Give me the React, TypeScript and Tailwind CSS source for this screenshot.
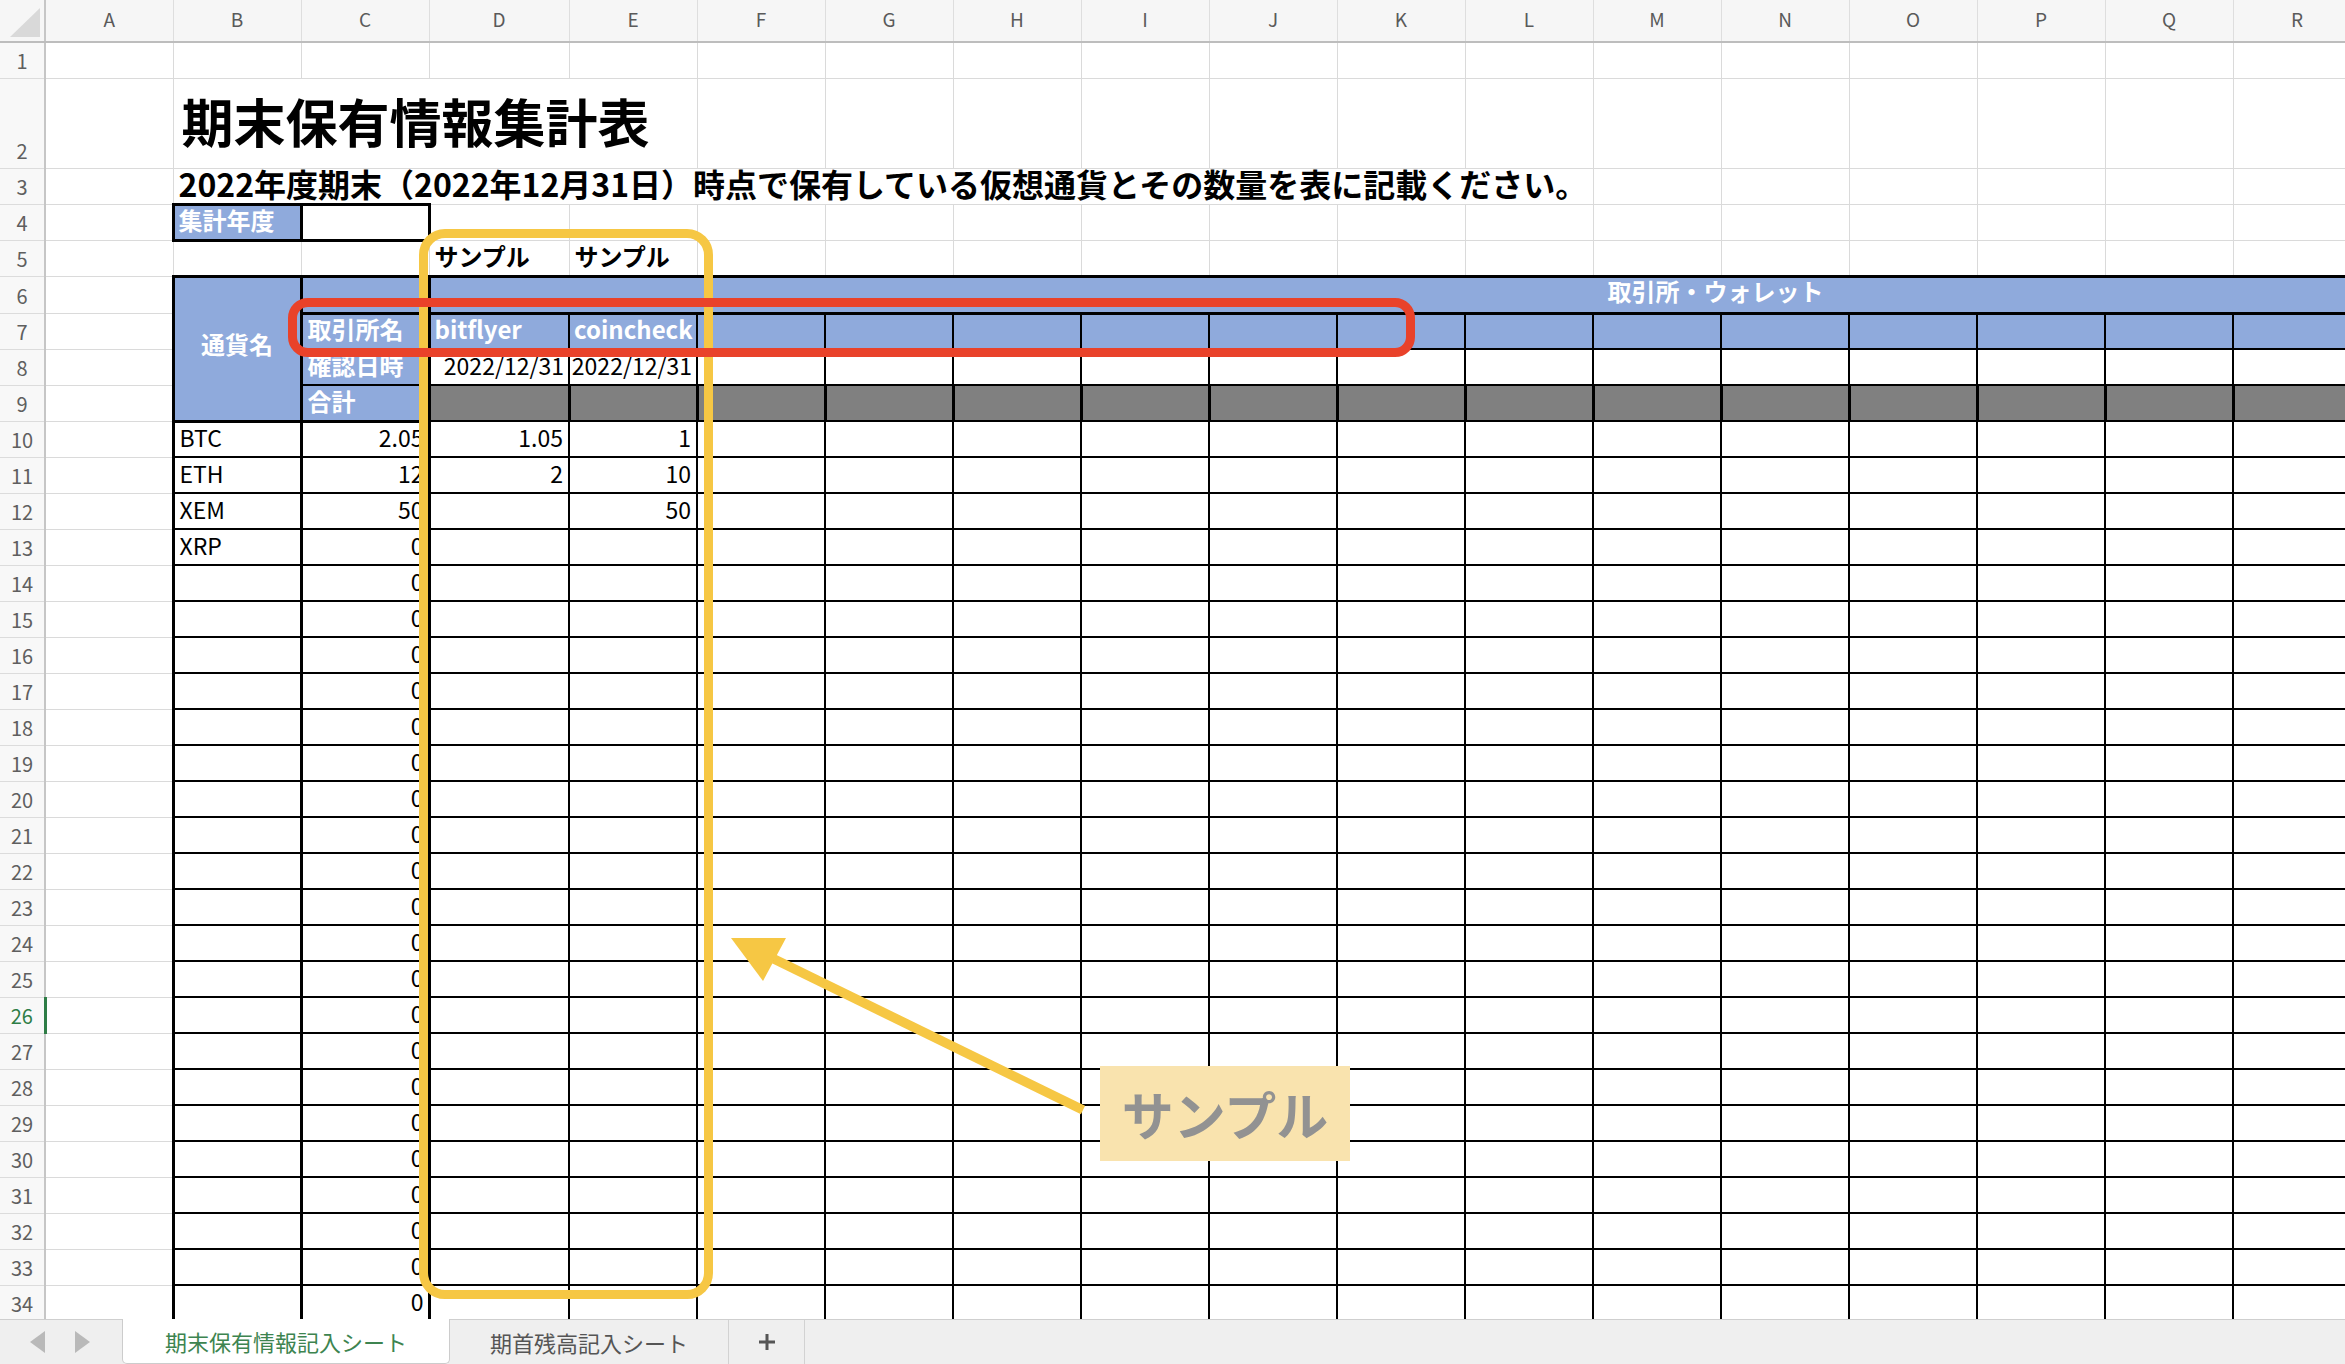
import React from 'react';

type Side = 'g' | 't' | 'T' | 'n';

// collapsed borders: the wider one wins, so black lines override the grey grid
const TOP: Record<Side, string> = {
  g: 'border-t border-t-[#dadada]',
  t: 'border-t-2 border-t-black',
  T: 'border-t-[3px] border-t-black',
  n: 'border-t-0',
};
const RIGHT: Record<Side, string> = {
  g: 'border-r border-r-[#dadada]',
  t: 'border-r-2 border-r-black',
  T: 'border-r-[3px] border-r-black',
  n: 'border-r-0',
};
const BOTTOM: Record<Side, string> = {
  g: 'border-b border-b-[#dadada]',
  t: 'border-b-2 border-b-black',
  T: 'border-b-[3px] border-b-black',
  n: 'border-b-0',
};
const LEFT: Record<Side, string> = {
  g: 'border-l border-l-[#dadada]',
  t: 'border-l-2 border-l-black',
  T: 'border-l-[3px] border-l-black',
  n: 'border-l-0',
};

const edges = (s: string) => {
  const [t, r, b, l] = s.split('') as Side[];
  return `${TOP[t]} ${RIGHT[r]} ${BOTTOM[b]} ${LEFT[l]}`;
};

const LETTERS = ['A', 'B', 'C', 'D', 'E', 'F', 'G', 'H', 'I', 'J', 'K', 'L', 'M', 'N', 'O', 'P', 'Q', 'R'];
const REST = ['F', 'G', 'H', 'I', 'J', 'K', 'L', 'M', 'N', 'O', 'P', 'Q', 'R'];

const coins = ['BTC', 'ETH', 'XEM', 'XRP'];
const totals = ['2.05', '12', '50'];
const bitflyer: Record<number, string> = { 10: '1.05', 11: '2' };
const coincheck: Record<number, string> = { 10: '1', 11: '10', 12: '50' };

const BLUE = 'bg-[#8faadc] text-white font-bold text-[24px]';
const DATA = 'text-[23px] text-black';

interface CellProps {
  b?: string;
  className?: string;
  colSpan?: number;
  rowSpan?: number;
  children?: React.ReactNode;
}

function Cell({ b = 'gggg', className = '', colSpan, rowSpan, children }: CellProps) {
  return (
    <td
      colSpan={colSpan}
      rowSpan={rowSpan}
      className={`whitespace-nowrap p-0 pb-[6px] align-bottom leading-[26px] ${edges(b)} ${className}`}
    >
      {children}
    </td>
  );
}

function RowHead({ n }: { n: number }) {
  const active = n === 26;
  return (
    <th
      className={`border-b border-b-[#dcdcdc] bg-[#f8f8f8] p-0 pb-[5px] text-center align-bottom text-[20px] font-normal leading-[24px] ${
        active ? 'border-r-[3px] border-r-[#2e7d46] text-[#2e7d46]' : 'border-r-2 border-r-[#c6c6c6] text-[#5f5f5f]'
      }`}
    >
      {n}
    </th>
  );
}

function Sheet() {
  const body: React.ReactNode[] = [];

  body.push(
    <tr key={1} className="h-[36px]">
      <RowHead n={1} />
      {LETTERS.map(l => <Cell key={l} />)}
    </tr>
  );

  body.push(
    <tr key={2} className="h-[90px]">
      <RowHead n={2} />
      <Cell />
      <Cell colSpan={4} className="pb-[16px] pl-[8px] text-[52px] font-bold leading-[62px] text-black">
        期末保有情報集計表
      </Cell>
      {REST.map(l => <Cell key={l} />)}
    </tr>
  );

  body.push(
    <tr key={3} className="h-[36px]">
      <RowHead n={3} />
      <Cell />
      <Cell colSpan={11} className="pb-[6px] pl-[5px] text-[32px] font-bold leading-[28px] text-black">
        2022年度期末（2022年12月31日）時点で保有している仮想通貨とその数量を表に記載ください。
      </Cell>
      {['M', 'N', 'O', 'P', 'Q', 'R'].map(l => <Cell key={l} />)}
    </tr>
  );

  body.push(
    <tr key={4} className="h-[36px]">
      <RowHead n={4} />
      <Cell />
      <Cell b="TTTT" className={`${BLUE} pl-[4px]`}>集計年度</Cell>
      <Cell b="TTTT" />
      {['D', 'E', ...REST].map(l => <Cell key={l} />)}
    </tr>
  );

  body.push(
    <tr key={5} className="h-[36px]">
      <RowHead n={5} />
      <Cell />
      <Cell />
      <Cell />
      <Cell className="pl-[5px] text-[24px] font-bold">サンプル</Cell>
      <Cell className="pl-[5px] text-[24px] font-bold">サンプル</Cell>
      {REST.map(l => <Cell key={l} />)}
    </tr>
  );

  body.push(
    <tr key={6} className="h-[36px]">
      <RowHead n={6} />
      <Cell />
      <Cell rowSpan={4} b="TTTT" className={`${BLUE} pb-[9px] text-center align-middle`}>
        通貨名
      </Cell>
      <Cell b="TTTT" className="bg-[#8faadc]" />
      <Cell colSpan={15} b="TnTT" className={`${BLUE} pb-[8px] pl-[1177px] align-middle leading-[24px]`}>
        取引所・ウォレット
      </Cell>
    </tr>
  );

  body.push(
    <tr key={7} className="h-[36px]">
      <RowHead n={7} />
      <Cell />
      <Cell b="TTtT" className={`${BLUE} pl-[5px]`}>取引所名</Cell>
      <Cell b="TttT" className={`${BLUE} pl-[4px]`}>bitflyer</Cell>
      <Cell b="Tttt" className={`${BLUE} pl-[4px]`}>coincheck</Cell>
      {REST.map(l => <Cell key={l} b="Tttt" className="bg-[#8faadc]" />)}
    </tr>
  );

  body.push(
    <tr key={8} className="h-[36px]">
      <RowHead n={8} />
      <Cell />
      <Cell b="tTtT" className={`${BLUE} pl-[5px]`}>確認日時</Cell>
      <Cell b="tttT" className={`${DATA} pr-[4px] text-right`}>2022/12/31</Cell>
      <Cell b="tttt" className={`${DATA} pr-[4px] text-right`}>2022/12/31</Cell>
      {REST.map(l => <Cell key={l} b="tttt" />)}
    </tr>
  );

  body.push(
    <tr key={9} className="h-[36px]">
      <RowHead n={9} />
      <Cell />
      <Cell b="tTTT" className={`${BLUE} pl-[5px]`}>合計</Cell>
      <Cell b="tTtT" className="bg-[#808080]" />
      <Cell b="tTtt" className="bg-[#808080]" />
      {REST.map(l => <Cell key={l} b="tTtt" className="bg-[#808080]" />)}
    </tr>
  );

  for (let r = 10; r <= 34; r++) {
    const i = r - 10;
    body.push(
      <tr key={r} className="h-[36px]">
        <RowHead n={r} />
        <Cell />
        <Cell b="tTtT" className={`${DATA} pl-[5px]`}>{coins[i] ?? ''}</Cell>
        <Cell b="tTtt" className={`${DATA} pr-[4px] text-right`}>{totals[i] ?? '0'}</Cell>
        <Cell b="tttT" className={`${DATA} pr-[5px] text-right`}>{bitflyer[r] ?? ''}</Cell>
        <Cell b="tttt" className={`${DATA} pr-[5px] text-right`}>{coincheck[r] ?? ''}</Cell>
        {REST.map(l => <Cell key={l} b="tttt" />)}
      </tr>
    );
  }

  return (
    <table className="w-[2361px] table-fixed border-collapse">
      <colgroup>
        <col className="w-[45px]" />
        <col className="w-[128px]" />
        <col className="w-[128px]" />
        <col className="w-[128px]" />
        <col className="w-[140px]" />
        <col className="w-[128px]" />
        {REST.map(l => <col key={l} className="w-[128px]" />)}
      </colgroup>
      <thead>
        <tr className="h-[42px]">
          <th className="relative border-r-2 border-b-2 border-r-[#c6c6c6] border-b-[#bdbdbd] bg-[#f6f6f6] p-0">
            <svg className="absolute left-0 top-0" width="45" height="42" viewBox="0 0 45 42">
              <polygon points="40,8 40,37 10,37" fill="#d9d9d9" />
            </svg>
          </th>
          {LETTERS.map(l => (
            <th
              key={l}
              className="border-r border-b-2 border-r-[#dedede] border-b-[#bdbdbd] bg-[#f6f6f6] p-0 pb-[2px] text-center align-middle text-[19px] font-normal text-[#5a5a5a]"
            >
              {l}
            </th>
          ))}
        </tr>
      </thead>
      <tbody>{body}</tbody>
    </table>
  );
}

function SheetTabs() {
  return (
    <div className="flex h-[45px] items-stretch border-t border-t-[#cfcfcf] bg-[#efefef]">
      <div className="flex w-[122px] items-center gap-[30px] pl-[30px]">
        <svg width="15" height="22" viewBox="0 0 15 22">
          <polygon points="15,0 15,22 0,11" fill="#b9b9b9" />
        </svg>
        <svg width="15" height="22" viewBox="0 0 15 22">
          <polygon points="0,0 0,22 15,11" fill="#b9b9b9" />
        </svg>
      </div>
      <div className="-mt-px flex w-[328px] items-center justify-center rounded-b-[5px] border-x border-b border-[#cccccc] bg-white text-[22px] text-[#3d8450]">
        期末保有情報記入シート
      </div>
      <div className="flex w-[279px] items-center justify-center border-r border-r-[#d2d2d2] text-[22px] text-[#555555]">
        期首残高記入シート
      </div>
      <div className="flex w-[76px] items-center justify-center border-r border-r-[#d2d2d2]">
        <svg width="18" height="18" viewBox="0 0 18 18">
          <path d="M9 1v16M1 9h16" stroke="#555555" strokeWidth="3" />
        </svg>
      </div>
    </div>
  );
}

export default function App() {
  return (
    <div className="flex h-[1364px] w-[2345px] flex-col overflow-hidden bg-white font-['Noto_Sans_CJK_JP',sans-serif]">
      <div className="relative h-[1319px] overflow-hidden">
        <Sheet />

        {/* sample callouts drawn over the sheet */}
        <div className="pointer-events-none absolute left-[419px] top-[229px] h-[1070px] w-[294px] rounded-[26px] border-[9px] border-[#f6c744]" />
        <div className="pointer-events-none absolute left-[288px] top-[298px] h-[59px] w-[1127px] rounded-[20px] border-[9px] border-[#e9422a]" />
        <svg className="pointer-events-none absolute left-[720px] top-[925px]" width="380" height="200" viewBox="0 0 380 200">
          <line x1="363" y1="185" x2="54" y2="34" stroke="#f6c744" strokeWidth="9.5" />
          <polygon points="11,13 66,13 43,56" fill="#f6c744" />
        </svg>
        <div className="pointer-events-none absolute left-[1100px] top-[1066px] flex h-[95px] w-[250px] items-center justify-center bg-[#f9e3ae] text-[52px] font-bold text-[#929292]">
          サンプル
        </div>
      </div>
      <SheetTabs />
    </div>
  );
}
